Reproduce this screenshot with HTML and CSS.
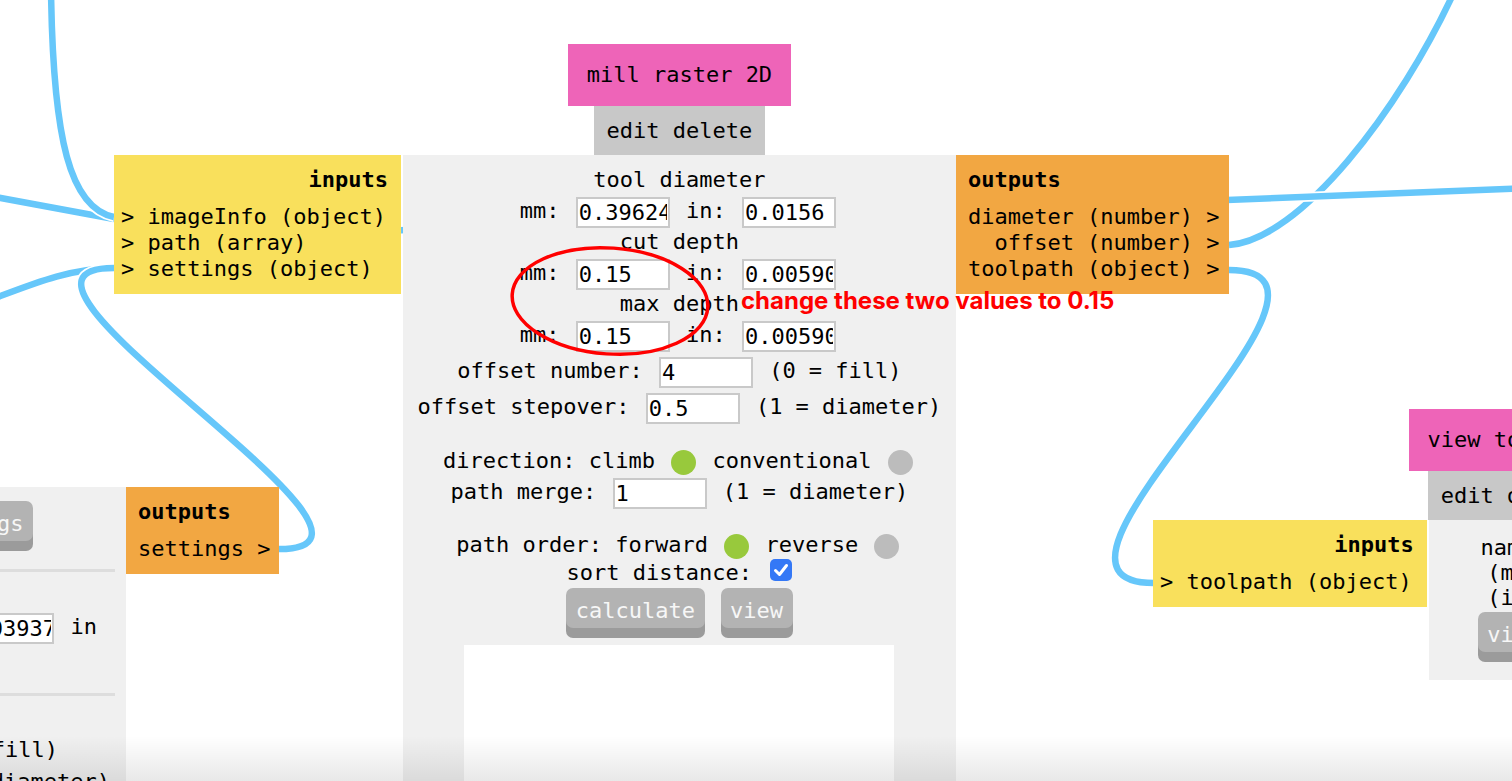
FILE: index.html
```html
<!DOCTYPE html>
<html lang="en">
<head>
<meta charset="utf-8">
<title>mods</title>
<link rel="stylesheet" href="styles.css">
</head>
<body>
<svg class="wires" width="1512" height="781" viewBox="0 0 1512 781">
  <path class="wire-bg" d="M 120 243 C 200 240, 320 233, 450 228"/>
  <path class="wire" d="M 120 243 C 200 240, 320 233, 450 228"/>
  <path class="wire-bg" d="M -10 196 C 40 205, 80 213, 114 219"/>
  <path class="wire" d="M -10 196 C 40 205, 80 213, 114 219"/>
  <path class="wire-bg" d="M 51 -10 C 53 140, 70 208, 114 217"/>
  <path class="wire" d="M 51 -10 C 53 140, 70 208, 114 217"/>
  <path class="wire-bg" d="M -10 300 C 30 285, 70 268, 114 268"/>
  <path class="wire" d="M -10 300 C 30 285, 70 268, 114 268"/>
  <path class="wire-bg" d="M 279 549 C 439 549, -46 268, 114 268"/>
  <path class="wire" d="M 279 549 C 439 549, -46 268, 114 268"/>
  <path class="wire-bg" d="M 1229 245 C 1300 240, 1400 110, 1455 -10"/>
  <path class="wire" d="M 1229 245 C 1300 240, 1400 110, 1455 -10"/>
  <path class="wire-bg" d="M 1150 203 L 1530 188"/>
  <path class="wire" d="M 1150 203 L 1530 188"/>
  <path class="wire-bg" d="M 1229 270 C 1389 270, 994 583, 1154 583"/>
  <path class="wire" d="M 1229 270 C 1389 270, 994 583, 1154 583"/>
</svg>

<div class="module mod-settings">
  <div class="panel lp">
    <button class="btn lp-btn">settings</button>
    <div class="sep lp-sep1"></div>
    <div class="row lp-row">tool: <input class="num" value="0.03937"> in</div>
    <div class="sep lp-sep2"></div>
    <div class="line lp-fill">offset number: (0 = fill)</div>
    <div class="line lp-diam">offset stepover: (1 = diameter)</div>
  </div>
  <div class="outs">
    <div class="hd">outputs</div>
    <div>settings &gt;</div>
  </div>
</div>

<div class="module mod-main">
  <div class="title">mill raster 2D</div>
  <div class="edit">edit delete</div>
  <div class="ins">
    <div class="hd">inputs</div>
    <div>&gt; imageInfo (object)</div>
    <div>&gt; path (array)</div>
    <div>&gt; settings (object)</div>
  </div>
  <div class="panel mp">
    <div class="line">tool diameter</div>
    <div class="row">mm: <input class="num" value="0.39624"> in: <input class="num" value="0.0156"></div>
    <div class="line">cut depth</div>
    <div class="row">mm: <input class="num" value="0.15"> in: <input class="num" value="0.00590"></div>
    <div class="line">max depth</div>
    <div class="row">mm: <input class="num" value="0.15"> in: <input class="num" value="0.00590"></div>
    <div class="row">offset number: <input class="num" value="4"> (0 = fill)</div>
    <div class="row">offset stepover: <input class="num" value="0.5"> (1 = diameter)</div>
    <div class="gap gap-a"></div>
    <div class="line">direction: climb <span class="dot on"></span> conventional <span class="dot"></span></div>
    <div class="row">path merge: <input class="num" value="1"> (1 = diameter)</div>
    <div class="gap gap-b"></div>
    <div class="line">path order: forward <span class="dot on"></span> reverse <span class="dot"></span></div>
    <div class="line sort">sort distance: <span class="check"><svg viewBox="0 0 22 22" width="22" height="22"><path d="M5.5 11.5 L9.5 15.5 L16.5 6.5" fill="none" stroke="#fff" stroke-width="3" stroke-linecap="round" stroke-linejoin="round"/></svg></span></div>
    <div class="btns"><button class="btn">calculate</button><button class="btn">view</button></div>
    <div class="preview"></div>
  </div>
  <div class="outs">
    <div class="hd">outputs</div>
    <div>diameter (number) &gt;</div>
    <div>offset (number) &gt;</div>
    <div>toolpath (object) &gt;</div>
  </div>
</div>

<div class="module mod-view">
  <div class="title">view toolpath</div>
  <div class="edit">edit delete</div>
  <div class="ins">
    <div class="hd">inputs</div>
    <div>&gt; toolpath (object)</div>
  </div>
  <div class="panel vp">
    <div class="vline">name:</div>
    <div class="vline">(mm)</div>
    <div class="vline">(in)</div>
    <button class="btn vp-btn">view</button>
  </div>
</div>

<svg class="anno" width="1512" height="781" viewBox="0 0 1512 781">
  <ellipse cx="610" cy="301" rx="98" ry="53" transform="rotate(4 610 301)" fill="none" stroke="#ff0000" stroke-width="3.5"/>
</svg>
<div class="note">change these two values to 0.15</div>

<div class="fade"></div>
</body>
</html>
```

FILE: styles.css
```css
* { box-sizing: border-box; }

html, body {
  margin: 0;
  padding: 0;
}

body {
  position: relative;
  width: 1512px;
  height: 781px;
  overflow: hidden;
  background: #ffffff;
  color: #000000;
  font-family: "DejaVu Sans Mono", "Liberation Mono", monospace;
  font-size: 22px;
}

/* wires */
.wires {
  position: absolute;
  left: 0;
  top: 0;
  z-index: 0;
}
.wire-bg {
  fill: none;
  stroke: #ffffff;
  stroke-width: 10;
}
.wire {
  fill: none;
  stroke: #66c7fa;
  stroke-width: 6.5;
}

/* modules (diagram nodes) */
.module {
  position: absolute;
  z-index: 1;
  display: grid;
  grid-template-areas:
    ". title ."
    ". edit ."
    "ins panel outs";
  align-items: start;
}
.mod-main {
  left: 114px;
  top: 44px;
  grid-template-columns: auto 553px auto;
}
.mod-view {
  left: 1153px;
  top: 409px;
  grid-template-columns: auto 170px auto;
}
.mod-settings {
  left: -274px;
  top: 487px;
  display: flex;
  align-items: flex-start;
}

.title {
  grid-area: title;
  justify-self: center;
  height: 62px;
  line-height: 62px;
  padding: 0 19px;
  background: #ee64b8;
  white-space: nowrap;
}
.edit {
  grid-area: edit;
  justify-self: center;
  height: 49px;
  line-height: 49px;
  padding: 0 13px;
  background: #c8c8c8;
  white-space: nowrap;
}

.ins {
  grid-area: ins;
  margin-right: 2px;
  padding: 12px 15px 12px 7px;
  background: #f9e05c;
  line-height: 26px;
  white-space: nowrap;
}
.ins .hd {
  text-align: right;
  font-weight: bold;
  margin-bottom: 11px;
  margin-right: -2px;
}
.outs {
  grid-area: outs;
  padding: 12px 9px 12px 12px;
  background: #f2a742;
  line-height: 26px;
  text-align: right;
  white-space: nowrap;
}
.outs .hd {
  text-align: left;
  font-weight: bold;
  margin-bottom: 11px;
}

.panel {
  grid-area: panel;
  background: #f0f0f0;
  text-align: center;
}

/* main panel */
.mp {
  height: 700px;
  padding-top: 12px;
}
.line {
  height: 26px;
  line-height: 26px;
  white-space: nowrap;
}
.row {
  height: 36px;
  line-height: 36px;
  white-space: nowrap;
}
.gap-a { height: 23px; }
.gap-b { height: 22px; }
.sort { margin-top: 2px; }

.num {
  width: 94px;
  height: 31px;
  margin: 0 3px;
  padding: 0 1px;
  border: 2px solid #c9c9c9;
  background: #ffffff;
  color: #000000;
  font-family: "DejaVu Sans Mono", "Liberation Mono", monospace;
  font-size: 22px;
  vertical-align: middle;
  outline: none;
}

.dot {
  display: inline-block;
  width: 25px;
  height: 25px;
  margin: -4px 3px;
  border-radius: 50%;
  background: #bcbcbc;
  vertical-align: middle;
}
.dot.on { background: #98c93c; }

.check {
  display: inline-block;
  width: 22px;
  height: 22px;
  margin: -8px 0 0 5px;
  border-radius: 5px;
  background: #3478f6;
  vertical-align: middle;
}
.check svg { display: block; }

.btns {
  display: flex;
  justify-content: center;
  gap: 16px;
  height: 50px;
  margin-top: 2px;
}
.btn {
  height: 40px;
  line-height: 35px;
  padding: 5px 9.5px 0;
  border: none;
  border-radius: 7px;
  background: #b3b3b3;
  box-shadow: 0 10px 0 #9b9b9b;
  color: #f7f7f7;
  font-family: "DejaVu Sans Mono", "Liberation Mono", monospace;
  font-size: 22px;
  white-space: nowrap;
}
.preview {
  width: 430px;
  height: 200px;
  margin: 7px auto 0;
  background: #ffffff;
}

/* left (settings) module panel */
.lp {
  width: 400px;
  height: 320px;
  padding-top: 14px;
  display: flex;
  flex-direction: column;
  align-items: flex-end;
}
.lp-btn { margin-right: 93px; flex: none; }
.sep {
  height: 3px;
  background: #dddddd;
}
.lp-sep1 { width: 300px; margin: 28px 11px 0 0; }
.lp-row { margin: 37px 29px 0 0; }
.lp-sep2 { width: 300px; margin: 48px 11px 0 0; }
.lp-fill { margin: 41px 68px 0 0; }
.lp-diam { margin: 6px 16px 0 0; }

/* right (view) module panel */
.vp {
  padding: 14.5px 0 18px;
  line-height: 25px;
  white-space: nowrap;
}
.vline { height: 25px; }
.vp-btn { margin-top: 2.5px; margin-bottom: 10px; }

/* annotation */
.anno {
  position: absolute;
  left: 0;
  top: 0;
  z-index: 2;
  pointer-events: none;
}
.note {
  position: absolute;
  left: 741px;
  top: 287px;
  z-index: 2;
  color: #ff0000;
  font-family: Inter, "Liberation Sans", sans-serif;
  font-weight: bold;
  font-size: 24px;
  line-height: 28px;
  white-space: nowrap;
}

.fade {
  position: absolute;
  left: 0;
  right: 0;
  bottom: 0;
  height: 45px;
  z-index: 3;
  background: linear-gradient(to bottom, rgba(0, 0, 0, 0), rgba(0, 0, 0, 0.09));
  pointer-events: none;
}
```
